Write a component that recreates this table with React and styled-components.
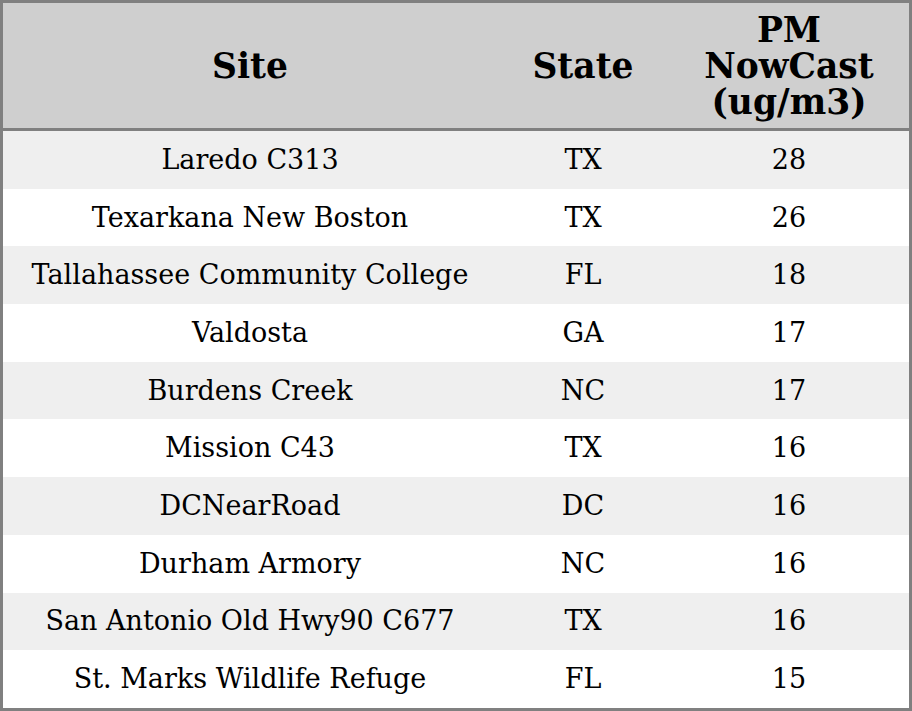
import styled, { createGlobalStyle } from 'styled-components'

const rows = [
  ['Laredo C313', 'TX', 28],
  ['Texarkana New Boston', 'TX', 26],
  ['Tallahassee Community College', 'FL', 18],
  ['Valdosta', 'GA', 17],
  ['Burdens Creek', 'NC', 17],
  ['Mission C43', 'TX', 16],
  ['DCNearRoad', 'DC', 16],
  ['Durham Armory', 'NC', 16],
  ['San Antonio Old Hwy90 C677', 'TX', 16],
  ['St. Marks Wildlife Refuge', 'FL', 15],
]

function App() {
  return (
    <>
      <GlobalStyle />
      <Table>
        <colgroup>
          <col style={{ width: 494 }} />
          <col style={{ width: 172 }} />
          <col />
        </colgroup>
        <thead>
          <tr>
            <HeadCell>Site</HeadCell>
            <HeadCell>State</HeadCell>
            <HeadCell>PM<br />NowCast<br />(ug/m3)</HeadCell>
          </tr>
        </thead>
        <tbody>
          {rows.map(([site, state, pm], i) => (
            <Row key={site} $shaded={i % 2 === 0}>
              <Cell>{site}</Cell>
              <Cell>{state}</Cell>
              <Cell>{pm}</Cell>
            </Row>
          ))}
        </tbody>
      </Table>
    </>
  )
}

export default App

const GlobalStyle = createGlobalStyle`
  body {
    margin: 0;
    background: #fff;
    font-family: "DejaVu Serif", serif;
  }
`

const Table = styled.table`
  width: 912px;
  border-collapse: separate;
  border-spacing: 0;
  border: 3px solid #808080;
  table-layout: fixed;
`

const HeadCell = styled.th`
  height: 125px;
  padding: 0;
  background: #cfcfcf;
  border-bottom: 3px solid #808080;
  font-size: 34.5px;
  font-weight: bold;
  line-height: 36px;
  color: #000;
  text-align: center;
  vertical-align: middle;
`

const Row = styled.tr`
  height: 57.7px;
  background: ${p => (p.$shaded ? '#efefef' : '#fff')};
`

const Cell = styled.td`
  padding: 0;
  font-size: 27px;
  line-height: 32px;
  color: #000;
  text-align: center;
  vertical-align: middle;
`
